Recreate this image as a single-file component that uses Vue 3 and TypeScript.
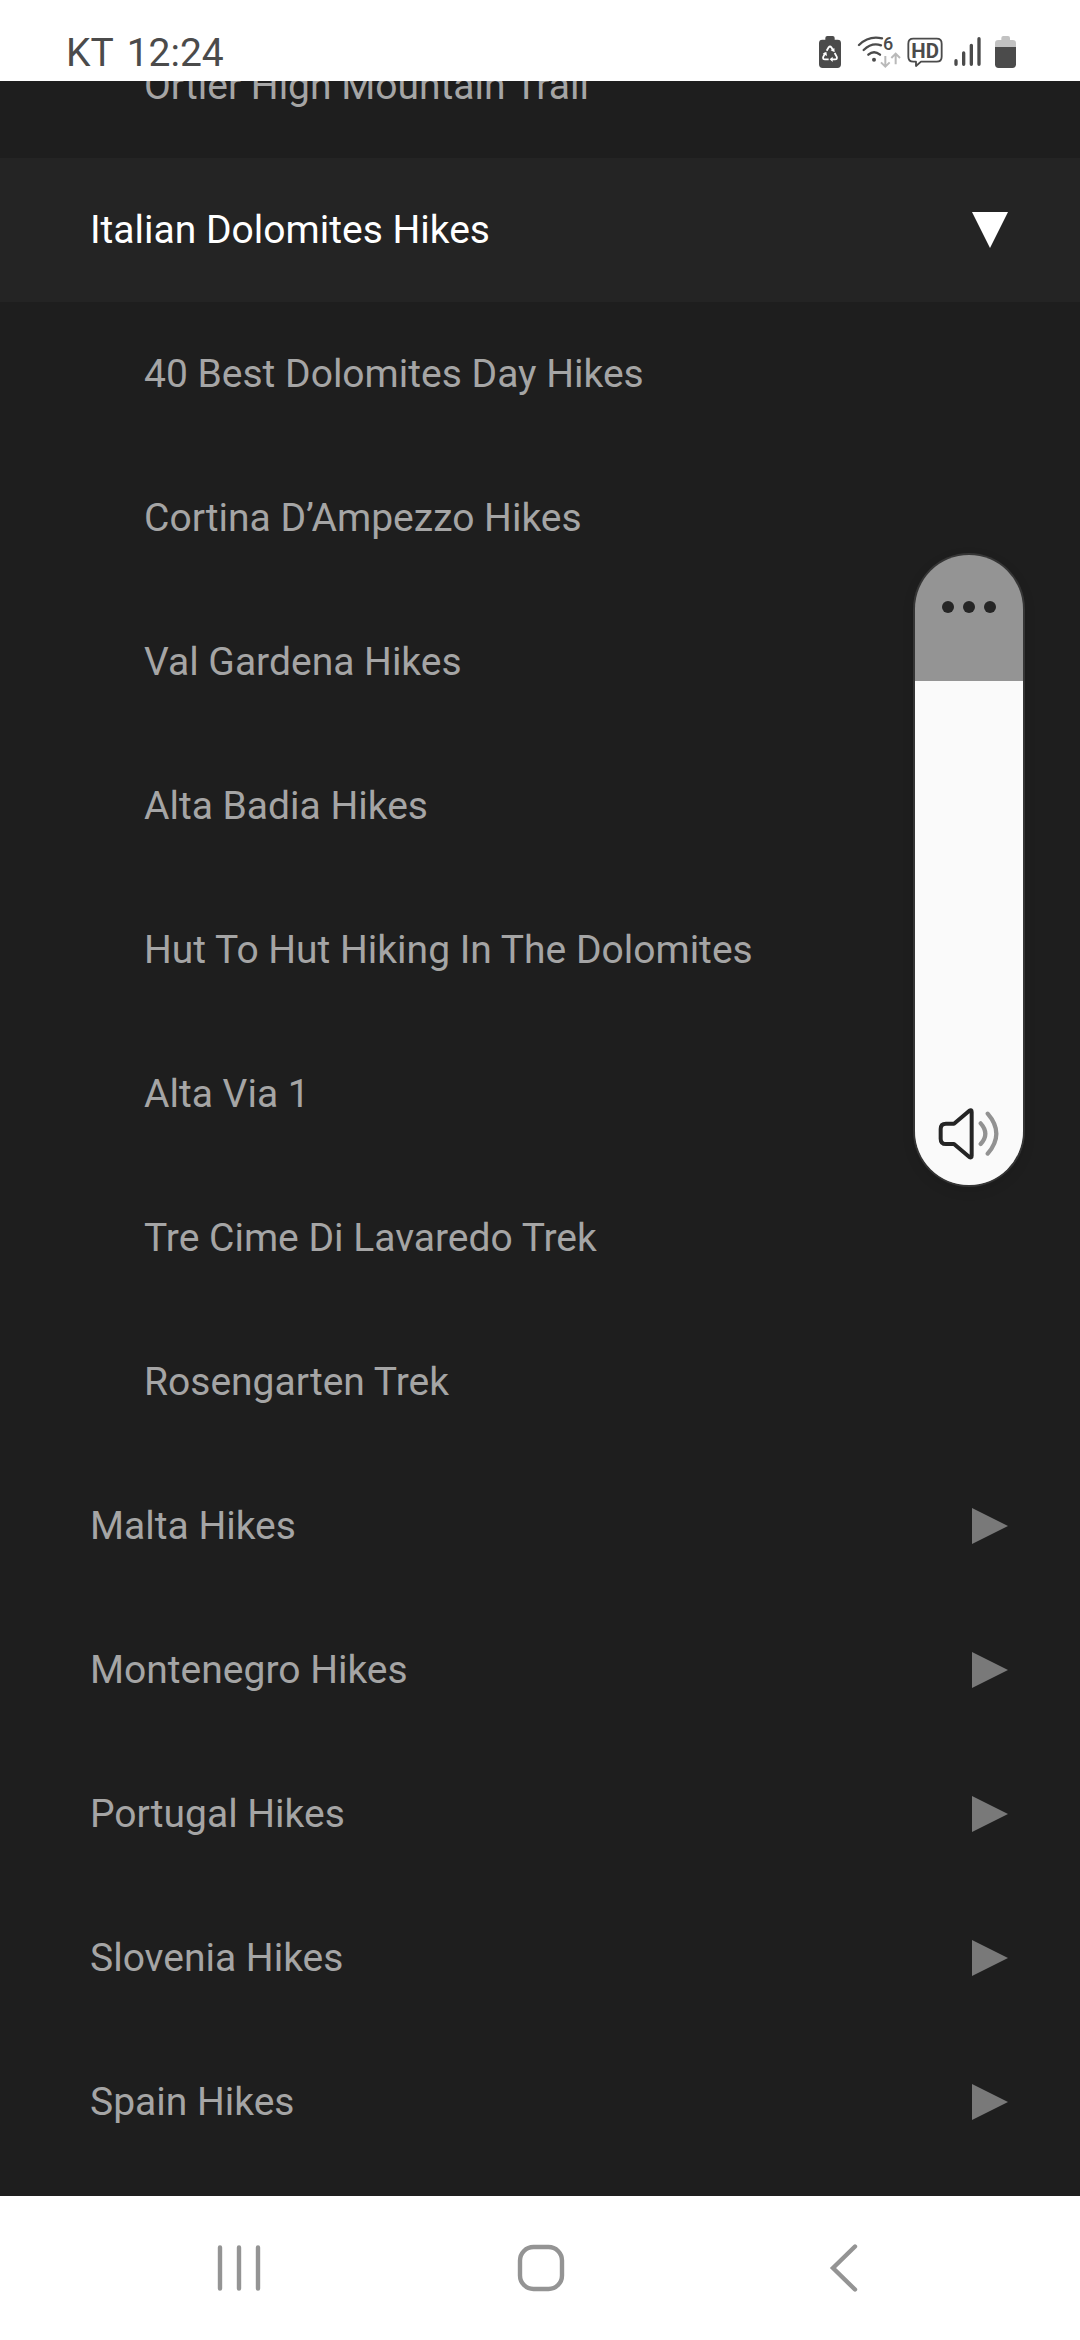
<script setup lang="ts">
interface MenuItem {
  label: string
  level: 1 | 2
  state?: 'open' | 'closed'
}

const items: MenuItem[] = [
  { label: 'Ortler High Mountain Trail', level: 2 },
  { label: 'Italian Dolomites Hikes', level: 1, state: 'open' },
  { label: '40 Best Dolomites Day Hikes', level: 2 },
  { label: 'Cortina D’Ampezzo Hikes', level: 2 },
  { label: 'Val Gardena Hikes', level: 2 },
  { label: 'Alta Badia Hikes', level: 2 },
  { label: 'Hut To Hut Hiking In The Dolomites', level: 2 },
  { label: 'Alta Via 1', level: 2 },
  { label: 'Tre Cime Di Lavaredo Trek', level: 2 },
  { label: 'Rosengarten Trek', level: 2 },
  { label: 'Malta Hikes', level: 1, state: 'closed' },
  { label: 'Montenegro Hikes', level: 1, state: 'closed' },
  { label: 'Portugal Hikes', level: 1, state: 'closed' },
  { label: 'Slovenia Hikes', level: 1, state: 'closed' },
  { label: 'Spain Hikes', level: 1, state: 'closed' },
]

const volume = 80
</script>

<template>
  <div class="screen">
    <header class="status">
      <span class="clock">KT 12:24</span>
      <div class="indicators">
        <svg class="eco" width="24" height="34" viewBox="54 45 72 102">
          <path d="M76 54q0-6 6-6h16q6 0 6 6v5h9q10 0 10 10v64q0 11-11 11H68q-11 0-11-11V69q0-10 10-10h9z" fill="#4b4b4b" />
          <g fill="none" stroke="#fff" stroke-width="5.5" stroke-linejoin="round">
            <path d="M80 92l6-10q4-5 8 0l6 10" />
            <path d="M104 99l6 11q3 8-5 8H95" />
            <path d="M86 118H75q-8 0-5-8l6-11" />
          </g>
          <path d="M103 84l1 13-12-6zM98 110v16l-9-8zM68 101l11-6 2 13z" fill="#fff" />
        </svg>
        <svg class="wifi" width="46" height="34" viewBox="168 45 138 102">
          <g fill="none" stroke="#4b4b4b" stroke-width="7" stroke-linecap="round">
            <path d="M177 75q29-29 69-20" />
            <path d="M191 90q25-24 52-14" />
            <path d="M205 104q17-15 35 0" />
          </g>
          <circle cx="222" cy="119" r="6" fill="#4b4b4b" />
          <text x="249" y="91" class="glyph six">6</text>
          <g fill="none" stroke="#b9b9b9" stroke-width="6">
            <path d="M256 108v32M243 127l13 13 13-13" />
            <path d="M287 133v-31M274 114l13-13 13 13" />
          </g>
        </svg>
        <svg class="hd" width="38" height="34" viewBox="318 45 114 102">
          <path d="M340 56h70q15 0 15 15v39q0 15-15 15h-47l-15 13v-13h-8q-15 0-15-15V71q0-15 15-15z" fill="none" stroke="#4b4b4b" stroke-width="5.5" stroke-linejoin="round" />
          <text x="334" y="113" class="glyph" textLength="83" lengthAdjust="spacingAndGlyphs">HD</text>
        </svg>
        <svg class="signal" width="29" height="34" viewBox="459 45 87 102">
          <path d="M468 122v11M491 99v34M514 76v57M537 56v77" stroke="#4b4b4b" stroke-width="10" stroke-linecap="round" />
        </svg>
        <svg class="battery" width="23" height="34" viewBox="582 45 69 102">
          <path d="M604 54q0-6 6-6h14q6 0 6 6v6h8q10 0 10 10v12h-63V70q0-10 10-10h9z" fill="#c2c2c2" />
          <path d="M585 81h63v52q0 11-11 11h-41q-11 0-11-11z" fill="#4b4b4b" />
        </svg>
      </div>
    </header>

    <main class="page">
      <nav class="menu">
        <a v-for="item in items" :key="item.label" class="row" :class="[`level-${item.level}`, item.state]">
          <span>{{ item.label }}</span>
          <svg v-if="item.state" class="arrow" width="36" height="36" viewBox="0 0 36 36">
            <path :d="item.state === 'open' ? 'M0 0h36L18 36z' : 'M0 0v36L36 18z'" fill="currentColor" />
          </svg>
        </a>
      </nav>
    </main>

    <footer class="navbar">
      <svg width="44" height="48" viewBox="0 0 44 48">
        <path d="M3 3.5v41M22 3.5v41M41 3.5v41" stroke="#949494" stroke-width="4.4" stroke-linecap="round" />
      </svg>
      <svg class="home" width="48" height="48" viewBox="0 0 48 48">
        <rect x="3" y="3" width="42" height="42" rx="13.5" fill="none" stroke="#949494" stroke-width="4.4" />
      </svg>
      <svg width="30" height="50" viewBox="0 0 30 50">
        <path d="M26 3.5L4 25l22 21.500" fill="none" stroke="#949494" stroke-width="4.4" stroke-linecap="round" />
      </svg>
    </footer>

    <aside class="volume">
      <div class="dots"><i></i><i></i><i></i></div>
      <div class="level" :style="{ height: volume + '%' }">
        <svg width="64" height="54" viewBox="0 0 192 162">
          <path d="M27 50h24L97 11q7-4 7 4v131q0 8-7 4L51 111H27Q11 111 11 95V66Q11 50 27 50z" fill="none" stroke="#252525" stroke-width="12" stroke-linejoin="round" />
          <path d="M131 49q28 31 0 62M152 20q52 60 0 120" fill="none" stroke="#929292" stroke-width="12.500" stroke-linecap="round" />
        </svg>
      </div>
    </aside>
  </div>
</template>

<style>
body {
  margin: 0;
  background: #fff;
}
</style>

<style scoped>
.screen {
  position: relative;
  display: flex;
  flex-direction: column;
  width: 1080px;
  height: 2340px;
  overflow: hidden;
  background: #fff;
  font-family: Roboto, "Liberation Sans", sans-serif;
}

.status {
  display: flex;
  flex: none;
  justify-content: space-between;
  box-sizing: border-box;
  height: 81px;
  padding: 0 63px 0 66px;
}

.clock {
  padding-top: 30px;
  color: #4b4b4b;
  font-size: 39px;
  line-height: 46px;
  word-spacing: 4px;
}

.indicators {
  display: flex;
  height: 34px;
  padding-top: 35px;
}

.wifi {
  margin-left: 14px;
}

.hd {
  margin-left: 4px;
}

.signal {
  margin-left: 9px;
}

.battery {
  margin-left: 12px;
}

.glyph {
  fill: #4b4b4b;
  font-size: 61px;
  font-weight: 700;
}

.six {
  font-size: 54px;
  font-weight: 500;
}

.page {
  display: flex;
  flex: none;
  flex-direction: column;
  justify-content: flex-end;
  box-sizing: border-box;
  height: 2115px;
  padding-bottom: 22px;
  overflow: hidden;
  background: #1e1e1e;
}

.row {
  display: flex;
  align-items: center;
  justify-content: space-between;
  box-sizing: border-box;
  height: 144px;
  padding: 0 72px 0 90px;
  color: #a5a5a5;
  font-size: 39px;
  line-height: 54px;
  white-space: nowrap;
}

.level-2 {
  padding-left: 144px;
}

.open {
  background: #242424;
  color: #fff;
}

.closed .arrow {
  color: #797979;
}

.navbar {
  display: flex;
  flex: 1;
  align-items: center;
  justify-content: space-between;
  padding: 0 221px 0 217px;
}

.home {
  margin-right: 8px;
}

/* System volume slider floats over the page. */
.volume {
  position: absolute;
  top: 555px;
  left: 915px;
  display: flex;
  flex-direction: column;
  justify-content: space-between;
  width: 108px;
  height: 630px;
  border-radius: 54px;
  overflow: hidden;
  background: #949494;
  box-shadow: 0 0 0 2px #353535, 0 4px 14px rgba(0, 0, 0, 0.12);
}

.dots {
  display: flex;
  justify-content: center;
  gap: 9px;
  padding-top: 46px;
}

.dots i {
  width: 12px;
  height: 12px;
  border-radius: 50%;
  background: #252525;
}

.level {
  display: flex;
  align-items: flex-end;
  box-sizing: border-box;
  padding: 0 0 24px 22px;
  background: #fafafa;
}
</style>
